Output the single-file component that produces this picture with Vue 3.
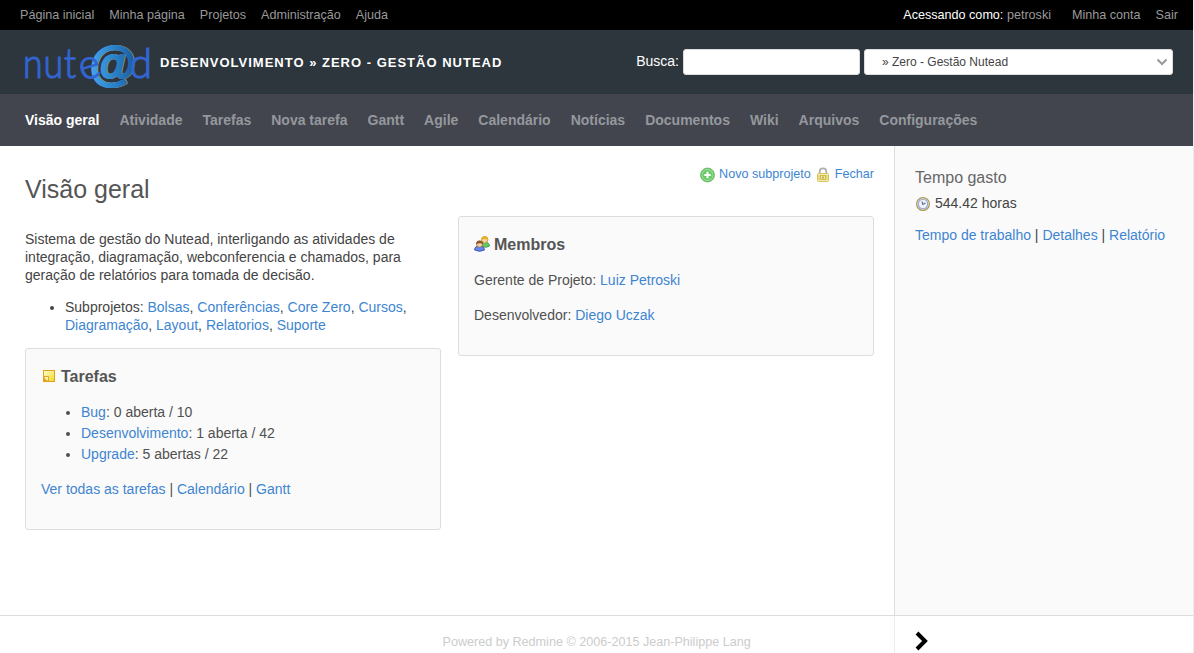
<script setup>
const topLinks = ['Página inicial', 'Minha página', 'Projetos', 'Administração', 'Ajuda']
const tabs = ['Visão geral', 'Atividade', 'Tarefas', 'Nova tarefa', 'Gantt', 'Agile', 'Calendário', 'Notícias', 'Documentos', 'Wiki', 'Arquivos', 'Configurações']
const subprojects = ['Bolsas', 'Conferências', 'Core Zero', 'Cursos', 'Diagramação', 'Layout', 'Relatorios', 'Suporte']
const trackers = [
  { name: 'Bug', count: '0 aberta / 10' },
  { name: 'Desenvolvimento', count: '1 aberta / 42' },
  { name: 'Upgrade', count: '5 abertas / 22' },
]
</script>

<template>
  <div class="page">
    <div class="top-menu">
      <nav class="top-links"><a v-for="l in topLinks" :key="l">{{ l }}</a></nav>
      <nav class="account">
        <span class="logged">Acessando como: <a>petroski</a></span>
        <a>Minha conta</a>
        <a>Sair</a>
      </nav>
    </div>

    <header class="header">
      <svg class="logo" width="130" height="60" viewBox="0 0 130 60">
        <defs>
          <linearGradient id="at" x1="0" y1="0" x2="1" y2="0">
            <stop offset="0" stop-color="#4aa5ec" />
            <stop offset=".5" stop-color="#2b86cc" />
            <stop offset="1" stop-color="#1b5b9e" />
          </linearGradient>
        </defs>
        <text class="at at-shadow" x="67.800" y="48.300">@</text>
        <text class="at at-face" x="67" y="47.500">@</text>
        <text class="word" transform="translate(1 46) scale(.87 1)" x="0 23.500 47">nut</text>
        <text class="word" transform="translate(60.500 49) rotate(-17)">e</text>
        <text class="word" x="107.500" y="46">d</text>
      </svg>
      <h1>Desenvolvimento » Zero - Gestão Nutead</h1>
      <div class="search">
        <label>Busca:</label>
        <div class="field"></div>
        <div class="select">
          <span>» Zero - Gestão Nutead</span>
          <svg width="12" height="8" viewBox="0 0 12 8"><path d="M1.500 1.500 L6 6 L10.500 1.500" fill="none" stroke="#999" stroke-width="2" /></svg>
        </div>
      </div>
    </header>

    <nav class="tabs"><a v-for="(t, i) in tabs" :key="t" :class="{ selected: i === 0 }">{{ t }}</a></nav>

    <div class="main">
      <main class="content">
        <div class="overview">
          <h2>Visão geral</h2>
          <p class="about">Sistema de gestão do Nutead, interligando as atividades de integração, diagramação, webconferencia e chamados, para geração de relatórios para tomada de decisão.</p>
          <ul class="subs">
            <li>Subprojetos: <template v-for="(s, i) in subprojects" :key="s"><a>{{ s }}</a><template v-if="i < subprojects.length - 1">, </template></template></li>
          </ul>
          <section class="box issues">
            <h3>
              <svg width="16" height="16" viewBox="0 0 16 16">
                <defs><linearGradient id="note" x1="0" y1="0" x2="1" y2="1"><stop offset="0" stop-color="#fffbd0" /><stop offset="1" stop-color="#ecdc20" /></linearGradient></defs>
                <rect x="2.500" y="2.500" width="11" height="11" fill="url(#note)" stroke="#e3a21a" />
                <path d="M3 8.500h4.500V13" fill="#fff4a0" stroke="#dba832" />
                <path d="M3 9l4 4H3z" fill="#e9a528" />
                <path d="M4 10l2 2" stroke="#fff3bb" />
              </svg>Tarefas
            </h3>
            <ul>
              <li v-for="t in trackers" :key="t.name"><a>{{ t.name }}</a>: {{ t.count }}</li>
            </ul>
            <p><a>Ver todas as tarefas</a> | <a>Calendário</a> | <a>Gantt</a></p>
          </section>
        </div>
        <div class="side">
          <div class="contextual">
            <svg width="16" height="16" viewBox="0 0 16 16">
              <defs><radialGradient id="add"><stop offset="0" stop-color="#4fbd4c" /><stop offset=".68" stop-color="#72ce70" /><stop offset=".8" stop-color="#a0dd9c" /><stop offset="1" stop-color="#45a943" /></radialGradient></defs>
              <circle cx="7.500" cy="8" r="7" fill="url(#add)" stroke="#61b95e" stroke-width=".7" />
              <path d="M7.500 4.800v6.400M4.300 8h6.400" stroke="#fff" stroke-width="2.200" />
            </svg>
            <a>Novo subprojeto</a>
            <svg width="16" height="16" viewBox="0 0 16 16">
              <path d="M4.700 7V4.300a3.300 2.900 0 0 1 6.600 0V7" fill="none" stroke="#b0b0b0" stroke-width="1.800" />
              <rect x="2.500" y="6.500" width="11" height="8" rx="1" fill="#e9da7b" stroke="#d6c35e" />
              <path d="M3 7.500h10M3 13.500h10" stroke="#f6efb5" />
              <rect x="5.500" y="8.500" width="5" height="4" fill="#efe6a0" stroke="#cdbb52" />
              <path d="M8 9.500v2" stroke="#877b35" />
            </svg>
            <a>Fechar</a>
          </div>
          <section class="box members">
            <h3>
              <svg width="16" height="16" viewBox="0 0 16 16">
                <path d="M6.500 10q0-4 4-4t5 3v1q-3 2-6 1z" fill="#65c866" stroke="#34933c" stroke-width=".8" />
                <circle cx="10.700" cy="3.800" r="3.200" fill="#f6d3a5" stroke="#bd9124" stroke-width=".8" />
                <path d="M7.300 4q0-3.700 3.500-3.700T14.200 4q-3-2-6.900 0" fill="#e6b222" />
                <path d="M.6 14q0-4 4.700-4t5.200 4q-4.800 2.600-9.900 0" fill="#6588ef" stroke="#3450b7" stroke-width=".9" />
                <circle cx="5.600" cy="8.300" r="3" fill="#f5cfaa" stroke="#9b622e" stroke-width=".8" />
                <path d="M2.200 8.500q-.3-4 3.400-4t3.500 4q-3-2.400-6.900 0" fill="#8d5729" />
              </svg>Membros
            </h3>
            <p>Gerente de Projeto: <a>Luiz Petroski</a></p>
            <p>Desenvolvedor: <a>Diego Uczak</a></p>
          </section>
        </div>
      </main>
      <aside class="sidebar">
        <h3>Tempo gasto</h3>
        <p class="hours">
          <svg width="16" height="16" viewBox="0 0 16 16">
            <circle cx="8" cy="9" r="6.400" fill="#f5f8fb" stroke="#aa985c" stroke-width="1.300" />
            <circle cx="8" cy="9" r="4.700" fill="#edf3fb" stroke="#94a5d2" stroke-width="1.100" />
            <path d="M7 6.500l.8 3L10.500 8" fill="none" stroke="#636d85" stroke-width="1.100" />
          </svg>544.42 horas
        </p>
        <p class="reports"><a>Tempo de trabalho</a> | <a>Detalhes</a> | <a>Relatório</a></p>
      </aside>
    </div>

    <footer class="footer">
      <p>Powered by Redmine © 2006-2015 Jean-Philippe Lang</p>
      <div class="toggle">
        <svg width="14" height="20" viewBox="0 0 14 20"><path d="M2 2l8 8-8 8" fill="none" stroke="#000" stroke-width="4" /></svg>
      </div>
    </footer>
  </div>
</template>

<style>
body { margin: 0; overflow: hidden; background: #fff; }
</style>

<style scoped>
* { box-sizing: border-box; }
.page { width: 1194px; height: 653px; display: flex; flex-direction: column; font: 14px/18px "Liberation Sans", Arial, sans-serif; color: #444; border-right: 1px solid #ececec; }
.page > * { flex: none; }
h1, h2, h3, p, ul { margin: 0; padding: 0; }
a { color: #3e85d1; }
svg { flex: none; }
.top-menu { height: 30px; background: #000; display: flex; justify-content: space-between; padding: 0 15px 0 20px; font-size: 12.600px; line-height: 30px; color: #fff; }
.top-menu a { color: #999; }
.top-links { display: flex; gap: 15px; }
.account { display: flex; gap: 15px; }
.logged { margin-right: 6px; }
.header { height: 64px; background: #2d363d; display: flex; align-items: center; padding: 0 20px 0 22px; }
.logo { overflow: visible; }
.at { font: italic bold 47px "Liberation Sans", Arial, sans-serif; stroke-width: 2.200px; stroke-linejoin: round; }
.at-face { fill: url(#at); stroke: url(#at); }
.at-shadow { fill: #a4a4a4; stroke: #a4a4a4; }
.word { font: 300 41px Lato, sans-serif; fill: #3265d1; stroke: #3265d1; stroke-width: 1.200px; stroke-linejoin: round; }
.header h1 { margin: 1px 0 0 8px; font-size: 13px; letter-spacing: 1px; text-transform: uppercase; color: #fff; white-space: nowrap; }
.search { margin-left: auto; display: flex; align-items: center; color: #fff; }
.search label { margin-bottom: 2px; }
.field { width: 177px; height: 26px; margin: 0 4px; background: #fff; border: 1px solid #ddd; border-radius: 3px; }
.select { width: 309px; height: 26px; background: #fff; border: 1px solid #ddd; border-radius: 3px; display: flex; align-items: center; justify-content: space-between; padding: 0 4px 0 17px; font-size: 12px; color: #444; }
.tabs { height: 52px; background: #42454e; display: flex; gap: 20px; padding-left: 25px; line-height: 52px; font-weight: bold; }
.tabs a { color: #95989d; }
.tabs a.selected { color: #fff; }
.main { height: 469px; display: flex; }
.content { width: 894px; display: flex; gap: 17px; padding: 0 20px 0 25px; }
.overview, .side { width: 416px; }
h2 { margin-top: 27px; font-size: 25px; line-height: 32px; font-weight: normal; color: #555; }
.about { margin-top: 25px; padding-right: 20px; }
.subs { margin-top: 14px; padding-left: 40px; }
.box { border: 1px solid #ddd; border-radius: 3px; background: #fafafa; padding: 18px 15px 0; color: #505050; }
.box h3 { display: flex; align-items: center; gap: 4px; font-size: 16px; line-height: 20px; color: #555; }
.box h3 svg { margin-bottom: 2px; }
.issues { margin-top: 14px; height: 182px; }
.issues ul { margin-top: 15px; padding-left: 40px; line-height: 21px; }
.issues p { margin-top: 15px; }
.contextual { height: 16px; margin-top: 20px; display: flex; justify-content: flex-end; align-items: center; gap: 4px; font-size: 12.600px; line-height: 16px; }
.contextual svg { margin: 2px -.5px 0 .5px; }
.members { margin-top: 34px; height: 140px; }
.members p { margin-top: 17px; }
.members h3 + p { margin-top: 16px; }
.sidebar { flex: 1; border-left: 1px solid #ddd; background: #fafafa; padding: 22px 20px 0; }
.sidebar h3 { font-size: 16px; line-height: 20px; font-weight: normal; color: #666; }
.hours { display: flex; align-items: center; gap: 4px; margin-top: 6px; }
.reports { margin-top: 14px; }
.footer { height: 38px; border-top: 1px solid #ddd; display: flex; font-size: 12.600px; }
.footer p { width: 894px; padding: 17px 0 0 442.500px; color: #ccc; white-space: nowrap; }
.toggle { flex: 1; border-left: 1px solid #ececec; padding: 15px 0 0 20px; }
</style>
